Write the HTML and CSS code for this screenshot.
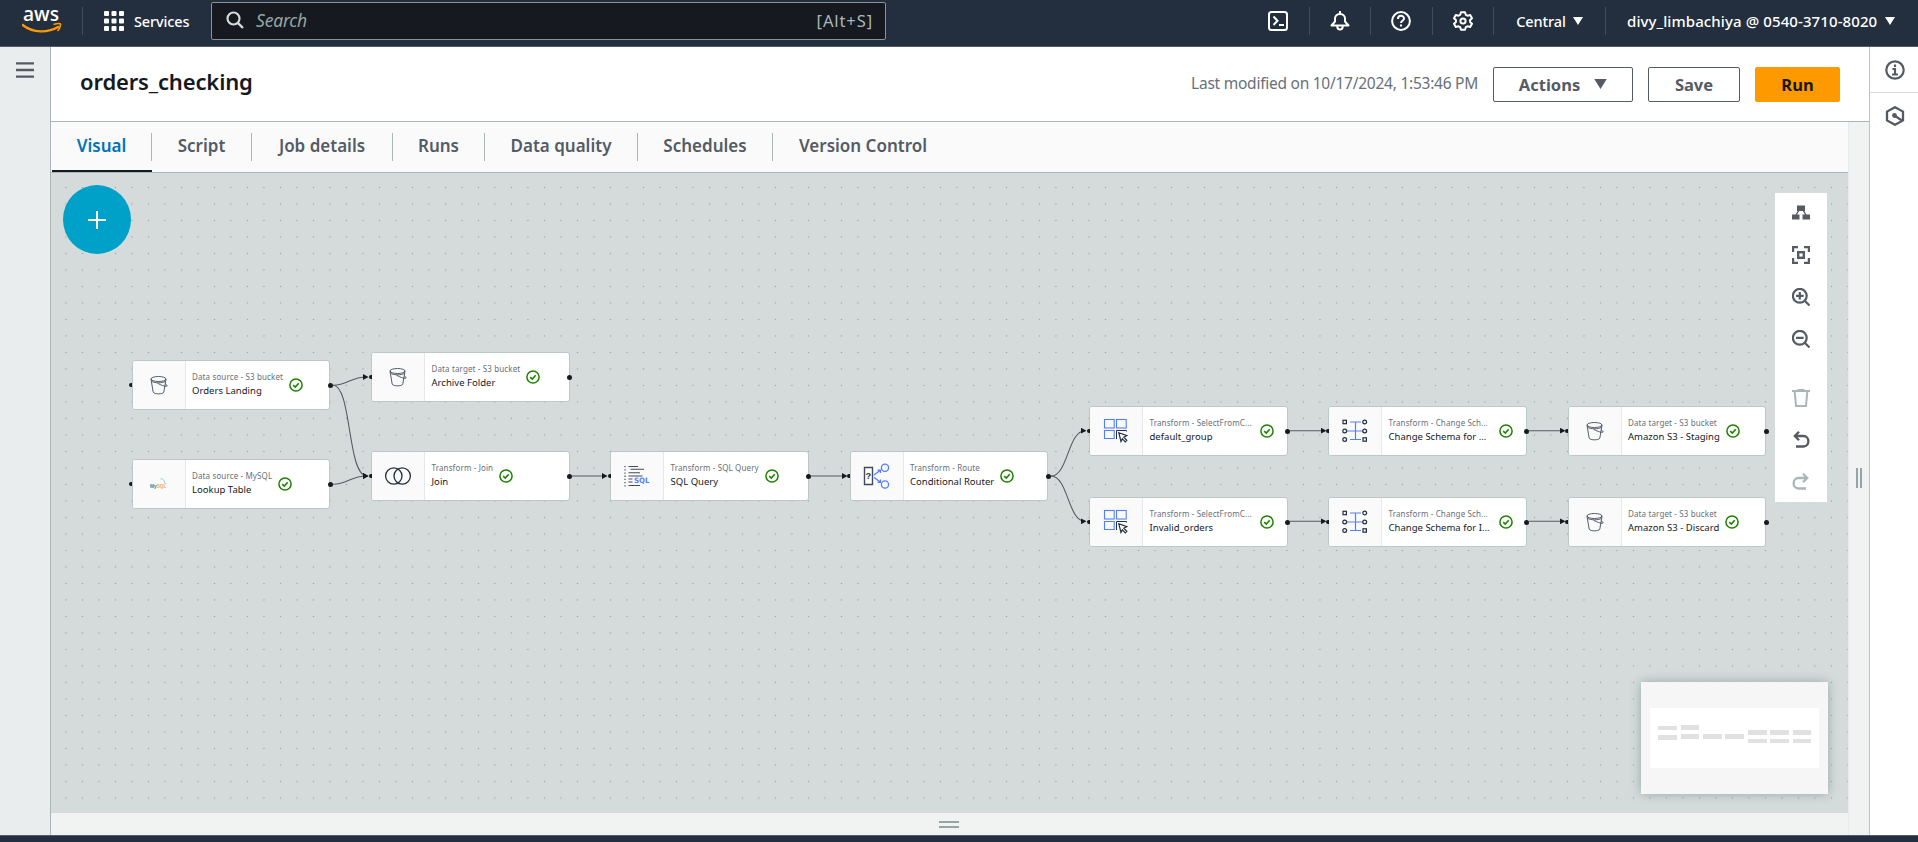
FILE: index.html
```html
<!DOCTYPE html>
<html lang="en">
<head>
<meta charset="utf-8">
<title>orders_checking</title>
<link rel="stylesheet" href="styles.css">
</head>
<body>
<svg class="defs" aria-hidden="true">
  <symbol id="caret" viewBox="0 0 10 8"><path d="M0 0H10L5 8Z" fill="currentColor"/></symbol>
  <symbol id="ok" viewBox="0 0 14 14"><circle cx="7" cy="7" r="6.1" fill="#fff" stroke="#1d8102" stroke-width="1.5"/><path d="M4.2 7.1 6.3 9 9.700 5.300" fill="none" stroke="#1d8102" stroke-width="1.600"/></symbol>
  <symbol id="bucket" viewBox="0 0 28 28"><g fill="none" stroke="#2b3545" stroke-width=".8"><ellipse cx="13.500" cy="8" rx="7.500" ry="2.500"/><path d="M6 8.200 8.200 21.200C9.500 23.400 17.500 23.400 18.800 21.200L21 8.200M12.600 12.300C17 14.600 21 15.800 22 15.100C22.400 14.400 21.300 13.500 20.300 12.900M6.600 10.200C9 12.200 17.500 12.400 20.300 10.400"/></g></symbol>
  <symbol id="join" viewBox="0 0 28 28"><g fill="none" stroke="#232f3e" stroke-width="1.300"><circle cx="9.800" cy="14" r="8.200"/><circle cx="18.200" cy="14" r="8.200"/></g></symbol>
  <symbol id="pick" viewBox="0 0 28 28"><g fill="none" stroke="#527fff" stroke-width="1.100"><rect x="2.500" y="2.500" width="9.700" height="8.500"/><rect x="14.500" y="2.500" width="9.700" height="8.500"/><path d="M12.200 13.500H2.500V21.500H12.200Z"/></g><path d="M14.500 22V13.500H24.500V14.500" fill="none" stroke="#232f3e" stroke-width="1"/><path d="M16.800 15.800 24.800 18.700 21.800 20.200 24.800 23.300 23.300 24.800 20.400 21.800 19 24.500Z" fill="#fff" stroke="#232f3e" stroke-width="1.200"/></symbol>
  <symbol id="schema" viewBox="0 0 28 28"><path d="M9 5H20M6 14H22M9 22.500H20M14.500 5V22.500" stroke="#527fff" stroke-width="1.200"/><g fill="#fafafa" stroke="#232f3e" stroke-width="1.200"><rect x="2" y="3.300" width="3.400" height="3.400"/><circle cx="3.700" cy="14" r="1.900"/><circle cx="3.700" cy="22.500" r="1.900"/><circle cx="23.700" cy="5" r="1.900"/><circle cx="23.700" cy="14" r="1.900"/><rect x="22" y="20.800" width="3.400" height="3.400"/></g></symbol>
</svg>

<header class="topbar">
  <svg class="aws" viewBox="0 0 40 32"><text x="1" y="15.500" textLength="36" lengthAdjust="spacingAndGlyphs" class="aws-word">aws</text><path d="M0 19.500C11 28.800 26 28 37 21.500" fill="none" stroke="#f90" stroke-width="2.300"/><path d="M31.500 19.500C36 18 39.300 18.200 38.500 20C38.300 22.500 37.300 24.500 35.500 26" fill="none" stroke="#f90" stroke-width="1.600"/></svg>
  <i class="rule rule-logo"></i>
  <svg class="grid-icon" viewBox="0 0 20 20" fill="#fff"><rect width="5" height="5" rx="1"/><rect x="7.500" width="5" height="5" rx="1"/><rect x="15" width="5" height="5" rx="1"/><rect y="7.500" width="5" height="5" rx="1"/><rect x="7.500" y="7.500" width="5" height="5" rx="1"/><rect x="15" y="7.500" width="5" height="5" rx="1"/><rect y="15" width="5" height="5" rx="1"/><rect x="7.500" y="15" width="5" height="5" rx="1"/><rect x="15" y="15" width="5" height="5" rx="1"/></svg>
  <span class="services">Services</span>
  <div class="search">
    <svg viewBox="0 0 18 18"><circle cx="7.500" cy="7.500" r="6" fill="none" stroke="#d5dbdb" stroke-width="2.200"/><path d="M11.800 11.800 17 17" stroke="#d5dbdb" stroke-width="2.400"/></svg>
    <em>Search</em><span class="hint">[Alt+S]</span>
  </div>
  <nav class="tools">
    <span class="tool"><svg viewBox="0 0 20 20"><rect x="1" y="1" width="18" height="18" rx="2.500"/><path d="M5.500 5.500 9.500 9.700 5.500 14M11 14H16"/></svg></span>
    <span class="tool"><svg viewBox="0 0 20 20"><path d="M10 0V3M1.500 14.500H18.500L15 10.500V7.500C15 4.800 12.500 3 10 3S5 4.800 5 7.500V10.500ZM7.300 15.500C7.300 19.600 12.700 19.600 12.700 15.500" stroke-linejoin="round"/></svg></span>
    <span class="tool"><svg viewBox="0 0 20 20"><circle cx="10" cy="10" r="8.900"/><path d="M7 8C7 3.800 13 4 13 7.500C13 9.800 10 9.700 10 12M10 13.500V15.500"/></svg></span>
    <span class="tool"><svg viewBox="0 0 20 20"><path d="M8 1.200H12L12.800 3.800 14.500 4.700 17.200 4 19 7.300 17.100 9.100V10.900L19 12.700 17.200 16 14.500 15.300 12.800 16.200 12 18.800H8L7.200 16.200 5.500 15.300 2.800 16 1 12.700 2.900 10.900V9.100L1 7.300 2.800 4 5.500 4.700 7.200 3.800Z" stroke-linejoin="round"/><circle cx="10" cy="10" r="2.600"/></svg></span>
    <span class="tool region"><b class="region-name">Central</b><svg class="tri"><use href="#caret"/></svg></span>
    <span class="tool account"><b class="account-name">divy_limbachiya @ 0540-3710-8020</b><svg class="tri"><use href="#caret"/></svg></span>
  </nav>
</header>

<div class="shell">
  <aside class="left"><svg viewBox="0 0 18 16"><path d="M0 1.300H18M0 8H18M0 14.600H18" stroke="#545b64" stroke-width="2.300"/></svg></aside>
  <section class="center">
    <div class="titlebar">
      <h1>orders_checking</h1>
      <span class="modified">Last modified on 10/17/2024, 1:53:46 PM</span>
      <button class="btn actions">Actions<svg><use href="#caret"/></svg></button>
      <button class="btn save">Save</button>
      <button class="btn run">Run</button>
    </div>
    <div class="below">
      <main class="work">
        <div class="tabs">
          <span class="tab active t1">Visual</span><span class="tab t2">Script</span><span class="tab t3">Job details</span><span class="tab t4">Runs</span><span class="tab t5">Data quality</span><span class="tab t6">Schedules</span><span class="tab t7">Version Control</span>
        </div>
        <div class="canvas">
          <svg class="edges" viewBox="51 173 1797 640">
            <defs>
              <pattern id="dots" x="602.200" y="179.200" width="16.500" height="16.500" patternUnits="userSpaceOnUse"><circle cx="8.250" cy="8.250" r=".7" fill="#94a3a5"/></pattern>
              <marker id="tip" markerWidth="6" markerHeight="6" refX="4" refY="3" orient="auto" markerUnits="userSpaceOnUse"><path d="M0 .1 5.500 3 0 5.900Z" fill="#16191f"/></marker>
            </defs>
            <rect x="51" y="173" width="1797" height="640" fill="url(#dots)"/>
            <g fill="none" stroke="#545b64" stroke-width="1.100">
              <path marker-end="url(#tip)" d="M333 385.300C348 385.300 350 377 367 377"/>
              <path marker-end="url(#tip)" d="M333 385.300C352 385.300 347 476 367 476"/>
              <path marker-end="url(#tip)" d="M333 484.300C348 484.300 350 476 367 476"/>
              <path marker-end="url(#tip)" d="M572 476H606"/><path marker-end="url(#tip)" d="M811 476H846"/>
              <path marker-end="url(#tip)" d="M1051 476C1068 476 1068 430.700 1085 430.700"/>
              <path marker-end="url(#tip)" d="M1051 476C1068 476 1068 521.300 1085 521.300"/>
              <path marker-end="url(#tip)" d="M1290 430.700H1325"/><path marker-end="url(#tip)" d="M1290 521.300H1325"/>
              <path marker-end="url(#tip)" d="M1529 430.700H1564"/><path marker-end="url(#tip)" d="M1529 521.300H1564"/>
            </g>
          </svg>
          <button class="add"><svg viewBox="0 0 18 18"><path d="M9 0V18M0 9H18" stroke="#fff" stroke-width="2"/></svg></button>

          <article class="node" style="left:80.500px;top:187px"><div class="pic"><svg><use href="#bucket"/></svg></div><div class="copy"><small>Data source - S3 bucket</small><strong>Orders Landing</strong></div><svg class="ok"><use href="#ok"/></svg></article>
          <article class="node" style="left:80.500px;top:286px"><div class="pic"><svg viewBox="0 0 28 28"><text x="5" y="18" class="mysql-word" textLength="16.500" lengthAdjust="spacingAndGlyphs"><tspan fill="#218b9d">My</tspan><tspan fill="#f7a84f">SQL</tspan></text><path d="M15.500 9C18 8 20 11 19.200 13L21 14" fill="none" stroke="#65aab5" stroke-width=".6"/></svg></div><div class="copy"><small>Data source - MySQL</small><strong>Lookup Table</strong></div><svg class="ok"><use href="#ok"/></svg></article>
          <article class="node" style="left:320px;top:179px"><div class="pic"><svg><use href="#bucket"/></svg></div><div class="copy"><small>Data target - S3 bucket</small><strong>Archive Folder</strong></div><svg class="ok"><use href="#ok"/></svg></article>
          <article class="node" style="left:320px;top:278px"><div class="pic"><svg><use href="#join"/></svg></div><div class="copy"><small>Transform - Join</small><strong>Join</strong></div><svg class="ok"><use href="#ok"/></svg></article>
          <article class="node" style="left:559px;top:278px"><div class="pic"><svg viewBox="0 0 28 28"><path d="M5.500 4.500H15M7.500 7.300H21M5.500 10.700H17M5.500 14H19.500M5.500 17H9.500M5.500 20H9.500M5.500 23.500H17" stroke="#414b59" stroke-width="1.100"/><path d="M2 4V25" stroke="#414b59" stroke-width="1.200" stroke-dasharray="1.300 1.900"/><text x="11" y="21.200" class="sql-word" textLength="15.500" lengthAdjust="spacingAndGlyphs">SQL</text></svg></div><div class="copy"><small>Transform - SQL Query</small><strong>SQL Query</strong></div><svg class="ok"><use href="#ok"/></svg></article>
          <article class="node" style="left:798.500px;top:278px"><div class="pic"><svg viewBox="0 0 28 28"><path d="M1.500 5.500H9.500V22.500H1.500Z" fill="#fff" stroke="#414b59" stroke-width="1.400"/><text x="2.800" y="17.300" class="q-word">?</text><g fill="none" stroke="#527fff" stroke-width="1.300"><circle cx="22" cy="5.800" r="3.600"/><circle cx="22" cy="22.500" r="3.600"/><path d="M11 13 17 8.500M11 15.500 17 19.800M14.500 8.200H17.500V11M14.500 20.300H17.500V17.500"/></g></svg></div><div class="copy"><small>Transform - Route</small><strong>Conditional Router</strong></div><svg class="ok"><use href="#ok"/></svg></article>
          <article class="node" style="left:1038px;top:233px"><div class="pic"><svg><use href="#pick"/></svg></div><div class="copy full"><small>Transform - SelectFromC...</small><strong>default_group</strong></div><svg class="ok"><use href="#ok"/></svg></article>
          <article class="node" style="left:1038px;top:324px"><div class="pic"><svg><use href="#pick"/></svg></div><div class="copy full"><small>Transform - SelectFromC...</small><strong>Invalid_orders</strong></div><svg class="ok"><use href="#ok"/></svg></article>
          <article class="node" style="left:1277px;top:233px"><div class="pic"><svg><use href="#schema"/></svg></div><div class="copy full"><small>Transform - Change Sch...</small><strong>Change Schema for ...</strong></div><svg class="ok"><use href="#ok"/></svg></article>
          <article class="node" style="left:1277px;top:324px"><div class="pic"><svg><use href="#schema"/></svg></div><div class="copy full"><small>Transform - Change Sch...</small><strong>Change Schema for I...</strong></div><svg class="ok"><use href="#ok"/></svg></article>
          <article class="node" style="left:1516.500px;top:233px"><div class="pic"><svg><use href="#bucket"/></svg></div><div class="copy"><small>Data target - S3 bucket</small><strong>Amazon S3 - Staging</strong></div><svg class="ok"><use href="#ok"/></svg></article>
          <article class="node" style="left:1516.500px;top:324px"><div class="pic"><svg><use href="#bucket"/></svg></div><div class="copy"><small>Data target - S3 bucket</small><strong>Amazon S3 - Discard</strong></div><svg class="ok"><use href="#ok"/></svg></article>

          <div class="palette">
            <svg viewBox="0 0 18 18"><path d="M5 1.500H13V7H5ZM0 10.500H7.500V15.500H0ZM10.500 10.500H18V15.500H10.500Z" fill="currentColor"/><path d="M7 6 3.500 12M11 6 14.500 12" stroke="currentColor" stroke-width="1.400"/></svg>
            <svg viewBox="0 0 18 18" fill="none" stroke="currentColor" stroke-width="2.200"><path d="M6 1.100H1.100V6M12 1.100H16.900V6M6 16.900H1.100V12M12 16.900H16.900V12"/><rect x="6.200" y="6.200" width="5.600" height="5.600" stroke-width="2.400"/></svg>
            <svg viewBox="0 0 18 18" fill="none" stroke="currentColor" stroke-width="2.200"><circle cx="7.800" cy="7.800" r="6.900"/><path d="M13 13 17.500 17.500M4 7.800H11.600M7.800 4V11.600"/></svg>
            <svg viewBox="0 0 18 18" fill="none" stroke="currentColor" stroke-width="2.200"><circle cx="7.800" cy="7.800" r="6.900"/><path d="M13 13 17.500 17.500M4 7.800H11.600"/></svg>
            <svg class="off gap" viewBox="0 0 18 18" fill="none" stroke="currentColor" stroke-width="2"><path d="M0 2H18M5.500 1H12.500M2.700 2.500 4 16.900H14L15.300 2.500"/></svg>
            <svg viewBox="0 0 18 18" fill="none" stroke="currentColor" stroke-width="2.300"><path d="M3 5H11.500C18 5 18 15.500 11.500 15.500H4M7 .8 2.800 5 7 9.200"/></svg>
            <svg class="off" viewBox="0 0 18 18" fill="none" stroke="currentColor" stroke-width="2.300"><path d="M15 5H6.500C0 5 0 15.500 6.500 15.500H14M11 .8 15.200 5 11 9.200"/></svg>
          </div>
          <div class="minimap"><svg viewBox="0 0 169 60"><path fill="#e1e1e1" d="M8 18h19v4H8zM31 17h18v5H31zM8 27h19v5H8zM31 26h18v5H31zM53 26h19v5H53zM75 26h19v5H75zM98 22h19v5H98zM120 22h19v5H120zM143 22h18v5H143zM98 31h19v4H98zM120 31h19v4H120zM143 31h18v4H143z"/></svg></div>
        </div>
        <div class="bottom"><i></i></div>
      </main>
      <div class="strip"><i></i></div>
    </div>
  </section>
  <aside class="right">
    <span class="info"><svg viewBox="0 0 20 20" fill="none" stroke="currentColor" stroke-width="2.200"><circle cx="10" cy="10" r="8.700"/><path d="M10 4.500V7M7.500 9H10V14M7 14.500H13"/></svg></span>
    <span class="hex"><svg viewBox="0 0 20 20" fill="none" stroke="currentColor" stroke-width="2.300"><path d="M10 1.200 18 5.600V14.400L10 18.800 2 14.400V5.600Z"/><circle cx="9.500" cy="9.500" r="2.400" fill="currentColor" stroke="none"/><path d="M10 10 17 14.500"/></svg></span>
  </aside>
</div>
<footer class="foot"></footer>
</body>
</html>
```
FILE: styles.css
```css
* { box-sizing: border-box; }
body { margin: 0; width: 1918px; height: 842px; overflow: hidden; display: flex; flex-direction: column; background: #fff; color: #16191f; font-family: "Noto Sans", "Open Sans", sans-serif; }
svg { display: block; flex: none; }
.defs { position: absolute; width: 0; height: 0; }

.topbar { height: 47px; flex: none; background: #232f3e; border-bottom: 1px solid #545b64; display: flex; align-items: flex-start; color: #fff; }
.aws { width: 40px; height: 32px; margin: 5px 0 0 22px; }
.aws-word { font: 600 20px "Open Sans", sans-serif; fill: #fff; }
.rule { width: 1px; height: 28px; background: #414d5c; }
.rule-logo { margin: 7px 0 0 20px; }
.grid-icon { width: 20px; height: 20px; margin: 11px 0 0 21px; }
.services { flex: none; margin: 11px 0 0 10px; width: 77px; font-size: 14.500px; line-height: 21px; font-weight: 500; letter-spacing: -.15px; }
.search { margin-top: 2px; width: 675px; height: 38px; background: #16191f; border: 1px solid #879596; border-radius: 2px; display: flex; align-items: center; padding: 0 12px 2px 14px; }
.search svg { width: 18px; height: 18px; }
.search em { margin-left: 12px; font-size: 17.500px; color: #95a5a6; letter-spacing: -.2px; }
.hint { margin-left: auto; font-size: 16.500px; color: #aab7b8; letter-spacing: .9px; }
.tools { margin-left: auto; display: flex; align-items: flex-start; }
.tool { height: 28px; margin-top: 7px; width: 61.500px; display: flex; align-items: center; justify-content: center; border-right: 1px solid #414d5c; }
.tool > svg:not(.tri) { width: 20px; height: 20px; fill: none; stroke: #fff; stroke-width: 2; }
.tool b { font-size: 14.500px; font-weight: 500; white-space: nowrap; line-height: 28px; }
.tri { width: 10px; height: 8px; }
.region { width: 112px; gap: 7px; }
.region-name { letter-spacing: -.1px; }
.account { width: 312px; border: 0; gap: 8px; justify-content: flex-start; padding-left: 21px; }
.tool .account-name { font-size: 15px; letter-spacing: .1px; }

.shell { flex: 1; min-height: 0; display: flex; }
.left { width: 51px; background: #e9eded; border-right: 1px solid #aab7b8; padding: 15px 0 0 16px; }
.left svg { width: 18px; height: 16px; }
.center { width: 1818px; display: flex; flex-direction: column; }
.titlebar { height: 75px; border-bottom: 1px solid #aab7b8; display: flex; align-items: flex-start; padding: 20px 29px 0 29px; background: #fff; }
h1 { margin: -5px auto 0 0; font-size: 22px; line-height: 38px; font-weight: 600; letter-spacing: -.15px; }
.modified { margin-right: 15px; font-size: 15.500px; line-height: 32px; color: #687078; letter-spacing: -.25px; white-space: nowrap; }
.btn { height: 35px; font: 700 16.500px "Noto Sans", sans-serif; color: #545b64; background: #fff; border: 1px solid #545b64; border-radius: 2px; padding: 0 0 1px; display: flex; align-items: center; justify-content: center; }
.actions { width: 140px; gap: 14px; }
.actions svg { width: 13px; height: 10px; }
.save { width: 92px; margin: 0 15px; }
.run { width: 85px; background: #f90; border-color: #f90; color: #16191f; }
.below { flex: 1; display: flex; }
.work { width: 1797px; display: flex; flex-direction: column; }
.tabs { height: 51px; background: #fafafa; border-bottom: 1px solid #aab7b8; display: flex; }
.tab { position: relative; height: 50px; line-height: 48px; font-size: 17px; font-weight: 600; color: #545b64; text-align: center; white-space: nowrap; padding-right: 1px; }
.tab:not(:last-child)::after { content: ""; position: absolute; right: 0; top: 11px; width: 1px; height: 28px; background: #aab7b8; }
.active { color: #0073bb; border-bottom: 2px solid #16191f; }
.t1 { margin-left: 1px; width: 100px; } .t2 { width: 100px; } .t3 { width: 141px; } .t4 { width: 92px; } .t5 { width: 153px; } .t6 { width: 135px; } .t7 { width: 181px; }

.canvas { position: relative; height: 640px; background: #d5dbdb; overflow: hidden; }
.edges { position: absolute; inset: 0; width: 1797px; height: 640px; }
.add { position: absolute; left: 12px; top: 12px; width: 68px; height: 69px; border: 0; border-radius: 50%; background: #00a1c9; display: flex; align-items: center; justify-content: center; padding: 0; }
.add svg { width: 18px; height: 18px; }
.node { position: absolute; width: 198.500px; height: 49.500px; background: #fff; border: 1px solid #bcc7c8; border-radius: 3px; display: flex; align-items: center; }
.node::before, .node::after { content: ""; position: absolute; top: 21.800px; width: 5px; height: 5px; border-radius: 50%; background: #16191f; }
.node::before { left: -3.500px; width: 3px; height: 4.500px; border-radius: 3px 0 0 3px; }
.node::after { right: -3.500px; }
.pic { width: 53px; align-self: stretch; background: #fafafa; border-right: 1px solid #e4e8e8; border-radius: 2px 0 0 2px; display: flex; align-items: center; justify-content: center; }
.pic svg { width: 28px; height: 28px; }
.copy { margin-left: 6.500px; display: flex; flex-direction: column; white-space: nowrap; }
.full { width: 104px; }
.copy small { font-size: 8px; line-height: 12px; color: #687078; letter-spacing: .13px; }
.copy strong { font-size: 9.500px; line-height: 16px; font-weight: 400; color: #16191f; letter-spacing: .02px; }
.ok { width: 14px; height: 14px; margin-left: 6px; }
.sql-word { font: 700 7.500px "DejaVu Sans", sans-serif; fill: #527fff; }
.q-word { font: 700 9px "Liberation Mono", monospace; fill: #232f3e; }
.mysql-word { font: 700 6px "Liberation Sans", sans-serif; }

.palette { position: absolute; left: 1724px; top: 20px; width: 52px; height: 309px; background: #fff; display: flex; flex-direction: column; align-items: center; gap: 24px; padding-top: 11px; color: #545b64; }
.palette svg { width: 18px; height: 18px; }
.palette .off { color: #aab7b8; }
.palette .gap { margin-top: 17px; }
.minimap { position: absolute; left: 1590px; top: 509px; width: 187px; height: 112px; background: #f6f6f6; box-shadow: 0 0 10px #9aa7a9; padding: 26px 9px; }
.minimap svg { width: 169px; height: 60px; background: #fff; }
.bottom { height: 22px; background: #f1f3f3; display: flex; padding: 8px 0 0 888px; }
.bottom i { width: 20px; height: 7px; border: solid #95a5a6; border-width: 2px 0; }
.strip { width: 21px; background: #f1f3f3; border-left: 1px solid #e7ebeb; padding: 346px 0 0 7px; }
.strip i { display: block; width: 6px; height: 20px; border: solid #95a5a6; border-width: 0 2px; }
.right { width: 49px; border-left: 1px solid #bcc3c4; background: #fff; color: #545b64; }
.right span { height: 46px; display: flex; align-items: center; justify-content: center; padding-left: 2px; }
.right svg { width: 20px; height: 20px; }
.info { border-bottom: 1px solid #d5dbdb; }
.foot { height: 7px; flex: none; background: #232f3e; border-top: 1px solid #545b64; }
```
